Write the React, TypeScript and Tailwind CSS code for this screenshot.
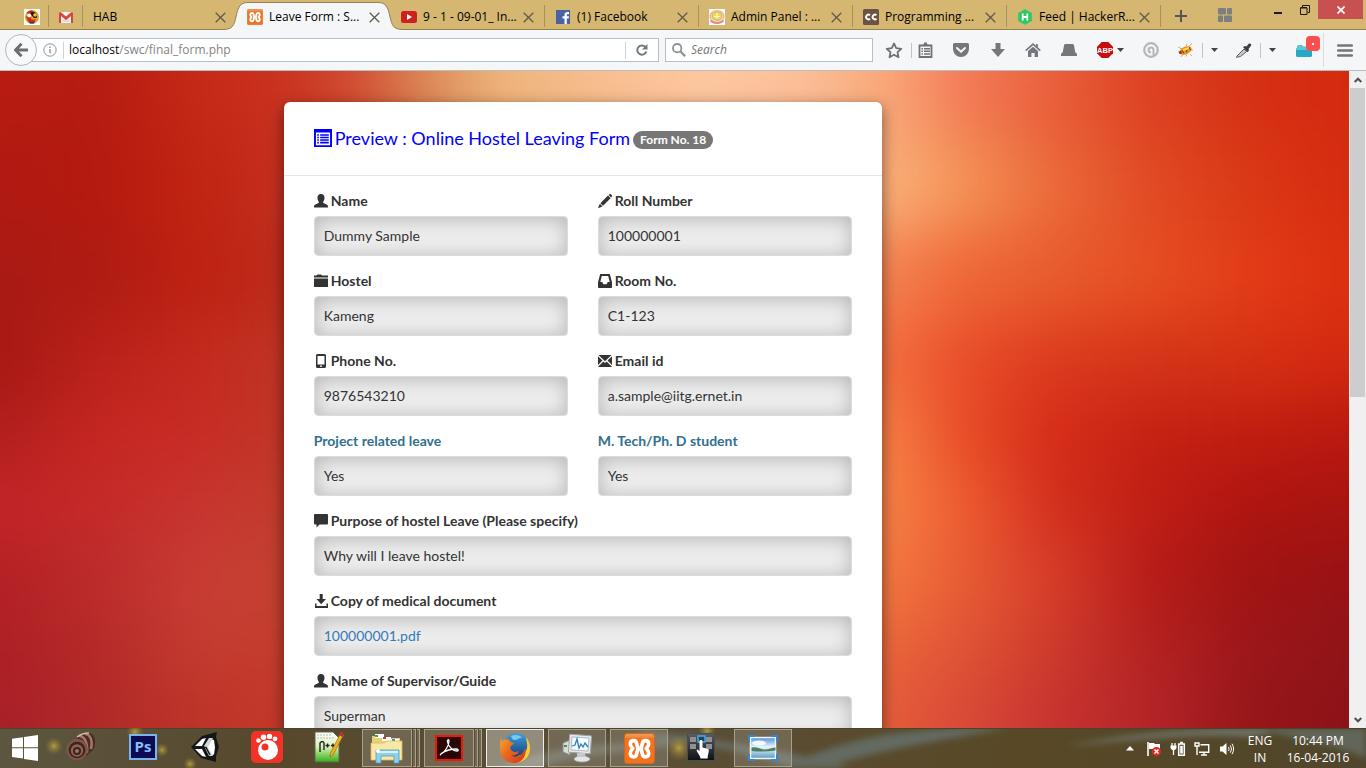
import React from "react";
import type { ReactNode } from "react";

const UI = "font-['Open_Sans','Noto_Sans',sans-serif]";

/* ---------- Favicons ---------- */

function XamppIcon({ size }: { size: number }) {
  return (
    <svg width={size} height={size} viewBox="0 0 32 32" aria-hidden="true">
      <defs>
        <linearGradient id="xg" x1="0" y1="0" x2="0" y2="1">
          <stop offset="0" stopColor="#f2a15c" />
          <stop offset=".14" stopColor="#ee8434" />
          <stop offset=".16" stopColor="#f17320" />
          <stop offset="1" stopColor="#f0731f" />
        </linearGradient>
      </defs>
      <rect x=".5" y=".5" width="31" height="31" rx="3" fill="url(#xg)" stroke="#d9661c" />
      <path
        d="M14.500 16L12.800 10C12 7 6.500 7 6.500 11.500C6.500 13.500 8 14.500 9 16C7.500 17.500 6.500 18.500 6.500 21C6.500 25.500 12 25.500 12.800 22.500zM17.500 16L19.200 10C20 7 25.500 7 25.500 11.500C25.500 13.500 24 14.500 23 16C24.500 17.500 25.500 18.500 25.500 21C25.500 25.500 20 25.500 19.200 22.500zM14 16h4"
        fill="none"
        stroke="#fff"
        strokeWidth="3.800"
        strokeLinecap="round"
        strokeLinejoin="round"
      />
    </svg>
  );
}

const favicons: Record<string, ReactNode> = {
  swirl: (
    <svg width="16" height="16" viewBox="0 0 16 16" aria-hidden="true">
      <rect width="16" height="16" fill="#fff" />
      <circle cx="8" cy="8" r="7" fill="#e8a020" />
      <path d="M2.500 4a6.500 6.500 0 0 1 6-2.400L7 6z" fill="#d02818" />
      <path d="M8 2.500a5 5 0 0 1 5 5c0 2-3 2-4 .5S5 5 8 2.500z" fill="#1c1c28" />
      <path d="M2 8c2-3 5-1 5 1s3 2 5 1c-1 4-6 5-8 2z" fill="#d8281c" />
      <circle cx="5.200" cy="6.500" r="1.900" fill="#fff" />
      <circle cx="11" cy="6" r="1.800" fill="#f5c040" />
      <path d="M4 11.500c2 2 5 2 7 .5l-1 2.500H6z" fill="#243c90" />
    </svg>
  ),
  gmail: (
    <svg width="16" height="16" viewBox="0 0 16 16" aria-hidden="true">
      <path d="M1 3h14v11H1z" fill="#f4f2f0" />
      <path d="M3 13l4-4 1 1 1-1 4 4z" fill="#dedbd8" />
      <path d="M1 3.500v10.500h2V7l5 4 5-4v7h2V3.500L13.500 3 8 7.500 2.500 3z" fill="#d8453a" />
    </svg>
  ),
  xampp: <XamppIcon size={16} />,
  youtube: (
    <svg width="16" height="16" viewBox="0 0 16 16" aria-hidden="true">
      <rect y="2" width="16" height="12" rx="2.500" fill="#d0201c" />
      <path d="M6 5l5 3-5 3z" fill="#fff" />
    </svg>
  ),
  facebook: (
    <svg width="16" height="16" viewBox="0 0 16 16" aria-hidden="true">
      <rect x="1" y="1" width="14" height="14" fill="#4862a3" />
      <path d="M9.500 15V9.600H7.500V7.300h2V5.800C9.500 3.800 10.600 3 12.300 3H14v2.200h-1.200c-.8 0-1 .4-1 1v1.100H14l-.3 2.300h-1.900V15z" fill="#fff" />
    </svg>
  ),
  seal: (
    <svg width="16" height="16" viewBox="0 0 16 16" aria-hidden="true">
      <rect width="16" height="16" fill="#fff" />
      <ellipse cx="8" cy="7.500" rx="7" ry="6" fill="#f3dfb8" stroke="#e5b0a0" strokeWidth="1.200" />
      <ellipse cx="8" cy="7" rx="5" ry="4.300" fill="#f0d65c" stroke="#c9a848" strokeWidth=".8" />
      <path d="M5 7.500h6M8 4.500v5" stroke="#fffbe0" strokeWidth="1.200" />
      <path d="M1.500 11.500c3 3.500 10 3.500 13 0" fill="none" stroke="#e08088" strokeWidth="1.600" />
    </svg>
  ),
  cc: (
    <svg width="16" height="16" viewBox="0 0 16 16" aria-hidden="true">
      <rect width="16" height="16" rx="1.500" fill="#6b5243" />
      <path d="M7 6.300A2.300 2.300 0 1 0 7 9.700M13.500 6.300a2.300 2.300 0 1 0 0 3.400" fill="none" stroke="#fff" strokeWidth="1.900" />
    </svg>
  ),
  hacker: (
    <svg width="16" height="16" viewBox="0 0 16 16" aria-hidden="true">
      <path d="M8 0.300l6.800 3.800v7.800L8 15.700l-6.800-3.800V4.100z" fill="#2ec866" />
      <path d="M5.700 4.500v7M10.300 4.500v7M5.700 8h4.600" stroke="#fff" strokeWidth="1.800" />
    </svg>
  ),
};

function CloseX() {
  return (
    <button aria-label="Close tab" className="flex size-3 shrink-0 items-center justify-center">
      <svg width="11" height="11" viewBox="0 0 11 11" aria-hidden="true">
        <path d="M.7.7l9.600 9.600M10.300.7L.7 10.300" stroke="#5f5a4a" strokeWidth="1.300" />
      </svg>
    </button>
  );
}

type TabInfo = { title: string; icon?: string; active?: boolean; line: boolean };

const tabs: TabInfo[] = [
  { title: "HAB", line: false },
  { title: "Leave Form : S...", icon: "xampp", active: true, line: false },
  { title: "9 - 1 - 09-01_ In...", icon: "youtube", line: true },
  { title: "(1) Facebook", icon: "facebook", line: true },
  { title: "Admin Panel : ...", icon: "seal", line: true },
  { title: "Programming ...", icon: "cc", line: true },
  { title: "Feed | HackerR...", icon: "hacker", line: true },
];

function Tab({ tab }: { tab: TabInfo }) {
  return (
    <div className="relative flex w-[154px] shrink-0 items-center gap-[3px] pt-1 pr-[11px] pl-2.5">
      {tab.active && (
        <svg className="absolute top-0 -left-[14px] h-[30px] w-[180px]" viewBox="0 0 180 30" aria-hidden="true">
          <path d="M0 30V29.500C10 29.500 11 25 13 17C15 7 17 2.500 25 2.500H155C163 2.500 165 7 167 17C169 25 170 29.500 180 29.500V30z" fill="#f5f6f7" />
          <path d="M0 29.500C10 29.500 11 25 13 17C15 7 17 2.500 25 2.500H155C163 2.500 165 7 167 17C169 25 170 29.500 180 29.500" fill="none" stroke="#94814d" />
        </svg>
      )}
      <button className="relative flex flex-1 items-center gap-1.5 text-left">
        {tab.icon && <span className="shrink-0">{favicons[tab.icon]}</span>}
        <span className="whitespace-nowrap">{tab.title}</span>
      </button>
      <span className="relative flex">
        <CloseX />
      </span>
      {tab.line && <span className="absolute top-[5px] right-0 h-[22px] w-px bg-[#a8935c]" />}
    </div>
  );
}

function TabStrip() {
  return (
    <header className={`flex h-[30px] shrink-0 border-b border-[#94814d] bg-[#d5b771] text-[12px] leading-4 text-black ${UI}`}>
      <nav aria-label="Tabs" className="-mb-px flex min-w-0 pl-[15px]">
        {["swirl", "gmail"].map((name) => (
          <button key={name} aria-label={name} className="relative flex w-[34px] shrink-0 items-center justify-center pt-1">
            {favicons[name]}
            <span className="absolute top-[5px] right-0 h-[22px] w-px bg-[#a8935c]" />
          </button>
        ))}
        {tabs.map((t) => (
          <Tab key={t.title} tab={t} />
        ))}
        <button aria-label="New tab" className="flex w-10 items-center justify-center pt-0.5">
          <svg width="12" height="12" viewBox="0 0 12 12" aria-hidden="true">
            <path d="M6 0v12M0 6h12" stroke="#55565a" strokeWidth="2" />
          </svg>
        </button>
        <button aria-label="Tab groups" className="flex w-12 items-center justify-center">
          <svg width="14" height="14" viewBox="0 0 14 14" fill="#7d7e7e" aria-hidden="true">
            <rect width="8" height="6.500" rx="1" />
            <rect x="9" width="5" height="6.500" rx="1" />
            <rect y="7.500" width="5" height="6.500" rx="1" />
            <rect x="6" y="7.500" width="8" height="6.500" rx="1" />
          </svg>
        </button>
      </nav>
      <div className="ml-auto flex h-[19px] pr-[3px]">
        <button aria-label="Minimize" className="flex w-[27px] items-center justify-center pt-1.5">
          <span className="h-0.5 w-2 bg-[#1c1a14]" />
        </button>
        <button aria-label="Restore" className="flex w-[27px] items-center justify-center">
          <svg width="10" height="10" viewBox="0 0 10 10" fill="none" stroke="#1c1a14" aria-hidden="true">
            <path d="M.5 3h6.500v6.500H.5zM.5 2.500H7" />
            <path d="M2.500 2.500v-2h7v7H7.500" />
          </svg>
        </button>
        <button aria-label="Close" className="flex w-[45px] items-center justify-center bg-[#c75050]">
          <svg width="8" height="8" viewBox="0 0 8 8" aria-hidden="true">
            <path d="M.5.5l7 7M7.500.5l-7 7" stroke="#fff" strokeWidth="1.700" />
          </svg>
        </button>
      </div>
    </header>
  );
}

/* ---------- Toolbar ---------- */

function Tool({ label, width, children }: { label: string; width: string; children: ReactNode }) {
  return (
    <button aria-label={label} className={`flex h-full shrink-0 items-center justify-center ${width}`}>
      {children}
    </button>
  );
}

function Caret() {
  return (
    <svg width="7" height="4" viewBox="0 0 7 4" aria-hidden="true">
      <path d="M0 0h7L3.500 4z" fill="#444" />
    </svg>
  );
}

function Rule() {
  return <span className="-mr-px h-[15px] w-px shrink-0 bg-[#c2c3c5]" />;
}

function Toolbar() {
  return (
    <div className={`flex h-[41px] shrink-0 items-center border-b border-[#b9bcc0] bg-[#f5f6f7] text-[12px] leading-4 ${UI}`}>
      <button aria-label="Back" className="z-10 ml-[5px] flex size-8 shrink-0 items-center justify-center rounded-full border border-[#aeb7c2] bg-[#f9f9fa]">
        <svg width="14" height="14" viewBox="0 0 14 14" aria-hidden="true">
          <path d="M7.500.8L1.500 7l6 6.200M2 7h12" fill="none" stroke="#6b6f74" strokeWidth="3" />
        </svg>
      </button>
      <div className="-ml-2 flex h-6 min-w-0 flex-1 items-center border border-[#b3bfcb] bg-white pl-[13px]">
        <svg width="14" height="14" viewBox="0 0 14 14" className="shrink-0" aria-hidden="true">
          <circle cx="7" cy="7" r="6.200" fill="none" stroke="#8f9194" />
          <path d="M7 6v4.300M7 3.500v1.500" stroke="#8f9194" strokeWidth="1.400" />
        </svg>
        <span className="mr-[5px] ml-1.5 h-[17px] w-px bg-[#d0d2d4]" />
        <a href="#address" className="flex-1 whitespace-nowrap text-[#838383]">
          <span className="text-black">localhost</span>/swc/final_form.php
        </a>
        <span className="h-[17px] w-px bg-[#cfd2d6]" />
        <Tool label="Reload" width="w-8">
          <svg width="12" height="12" viewBox="0 0 12 12" aria-hidden="true">
            <path d="M9.400 3A4.600 4.600 0 1 0 10.300 7.500" fill="none" stroke="#75787c" strokeWidth="2" />
            <path d="M11.500 0v5.500H6z" fill="#75787c" />
          </svg>
        </Tool>
      </div>
      <label className="ml-1.5 flex h-6 w-[208px] shrink-0 items-center border border-[#b3bfcb] bg-white pl-1.5">
        <svg width="14" height="14" viewBox="0 0 14 14" className="shrink-0" aria-hidden="true">
          <circle cx="5.200" cy="5.200" r="4.200" fill="none" stroke="#8d8f92" strokeWidth="1.800" />
          <path d="M8.300 8.300l4.900 4.900" stroke="#8d8f92" strokeWidth="2.200" />
        </svg>
        <input type="text" aria-label="Search" placeholder="Search" className="ml-[5px] w-full min-w-0 bg-transparent italic outline-none placeholder:text-[#757575]" />
      </label>
      <span className="w-[3px] shrink-0" />
      <Tool label="Bookmark" width="w-[35px]">
        <svg width="18" height="17" viewBox="0 0 18 17" aria-hidden="true">
          <path d="M9 1.500l2.200 4.700 5.100.6-3.800 3.400 1 5L9 12.700l-4.500 2.500 1-5L1.700 6.800l5.100-.6z" fill="none" stroke="#6e7277" strokeWidth="1.800" strokeLinejoin="round" />
        </svg>
      </Tool>
      <Rule />
      <Tool label="Bookmarks list" width="w-[29px]">
        <svg width="15" height="16" viewBox="0 0 15 16" aria-hidden="true">
          <path d="M1.500 3.500h12v11.500h-12z" fill="none" stroke="#6e7277" strokeWidth="1.800" />
          <path d="M4.500 2.500h6V4h-6zM6 .5h3V3H6z" fill="#6e7277" />
          <path d="M3.500 6.700h1.500M6 6.700h6M3.500 9.300h1.500M6 9.300h6M3.500 12h1.500M6 12h6" stroke="#6e7277" strokeWidth="1.400" />
        </svg>
      </Tool>
      <Tool label="Pocket" width="w-[41px]">
        <svg width="16" height="15" viewBox="0 0 16 15" aria-hidden="true">
          <path d="M1.500 0h13A1.500 1.500 0 0 1 16 1.500V6A8 8 0 0 1 0 6V1.500A1.500 1.500 0 0 1 1.500 0z" fill="#74787d" />
          <path d="M4 5l4 3.800L12 5" fill="none" stroke="#f5f6f7" strokeWidth="2" strokeLinecap="round" strokeLinejoin="round" />
        </svg>
      </Tool>
      <Tool label="Downloads" width="w-[34px]">
        <svg width="14" height="14" viewBox="0 0 14 14" aria-hidden="true">
          <path d="M4.500 0h5v6H14l-7 8-7-8h4.500z" fill="#74787d" />
        </svg>
      </Tool>
      <Tool label="Home" width="w-9">
        <svg width="16" height="15" viewBox="0 0 16 15" aria-hidden="true">
          <path d="M.7 7.600L8 1.200l7.300 6.400M12 1v4" fill="none" stroke="#74787d" strokeWidth="1.700" />
          <path d="M3 8l5-4.300L13 8v6H9.600v-4H6.400v4H3z" fill="#74787d" />
        </svg>
      </Tool>
      <Tool label="Hat" width="w-9">
        <svg width="16" height="12" viewBox="0 0 16 12" aria-hidden="true">
          <path d="M4.500 0h7c1 0 1.300.7 1.500 1.500L14.300 8.500c.7.3 1.700 1 1.700 2V12H0v-1.500c0-1 1-1.700 1.700-2L3 1.500C3.200.7 3.500 0 4.500 0z" fill="#74787d" />
        </svg>
      </Tool>
      <Tool label="Adblock Plus" width="w-[46px]">
        <span className="flex items-center gap-1">
          <svg width="16" height="16" viewBox="0 0 16 16" aria-hidden="true">
            <path d="M4.700 0h6.600L16 4.700v6.600L11.300 16H4.700L0 11.300V4.700z" fill="#c70d0f" />
            <text x="8" y="11" textAnchor="middle" fontSize="7.500" fontWeight="700" fill="#fff" fontFamily="Liberation Sans">
              ABP
            </text>
          </svg>
          <Caret />
        </span>
      </Tool>
      <Tool label="Avast" width="w-9">
        <svg width="16" height="16" viewBox="0 0 16 16" fill="none" stroke="#b6b6b6" aria-hidden="true">
          <circle cx="8" cy="8" r="6.800" strokeWidth="2.200" />
          <path d="M10.500 13.500V7.500A2.500 2.500 0 1 0 8 10.500" strokeWidth="2" />
        </svg>
      </Tool>
      <Tool label="Firebug" width="w-[33px]">
        <svg width="17" height="15" viewBox="0 0 17 15" aria-hidden="true">
          <path d="M1 4l4 2M1 9l3-.5M4 14l2-3M9 13.500l1-2.500M13 11l2 2M12 3l3-2.500M9 4l1-3M13 7h3" stroke="#b98a58" strokeWidth=".7" />
          <ellipse cx="8.500" cy="7.500" rx="6.500" ry="3.800" transform="rotate(-22 8.500 7.500)" fill="#e8941c" />
          <path d="M5 7l2 3.500M8.500 5.500l1.500 4M12 4l1.500 3" stroke="#7a3c0c" strokeWidth="1" />
          <ellipse cx="9" cy="6" rx="3.500" ry="1" transform="rotate(-22 9 6)" fill="#ffe070" />
          <circle cx="3.500" cy="9.500" r="1.500" fill="#b02810" />
        </svg>
      </Tool>
      <Rule />
      <Tool label="Firebug menu" width="w-[25px]">
        <Caret />
      </Tool>
      <Tool label="Colour picker" width="w-[33px]">
        <svg width="17" height="15" viewBox="0 0 17 15" aria-hidden="true">
          <path d="M1.500 13.500L9 6l2.500 2.500-6 5-4 .8z" fill="#c8c9ca" stroke="#5c5e60" />
          <path d="M8 4l2-1 1.500.5L13.500 1c1-1 3-.3 2.700 1.400L13.500 6l.5 1.500-1.500 1.800z" fill="#3c3e42" />
        </svg>
      </Tool>
      <Rule />
      <Tool label="Colour picker menu" width="w-[25px]">
        <Caret />
      </Tool>
      <Tool label="Folder" width="w-[38px]">
        <span className="relative flex h-[13px] w-4">
          <svg width="16" height="13" viewBox="0 0 16 13" aria-hidden="true">
            <path d="M1 2.500A1.500 1.500 0 0 1 2.500 1H6l1.500 1.500H14V5H1z" fill="#63c2cf" />
            <rect y="4" width="16" height="9" rx="1.500" fill="#27a9c4" />
            <rect y="4" width="16" height="2" rx="1" fill="#5cc7da" />
          </svg>
          <span className="absolute -top-2 left-[10px] flex h-[15px] w-[14px] items-center justify-center rounded-sm bg-[#fb4f4f] pt-0.5">
            <span className="size-0.5 bg-white" />
          </span>
        </span>
      </Tool>
      <span className="-mr-px h-[34px] w-px shrink-0 bg-[#dadbdd]" />
      <Tool label="Menu" width="w-[43px]">
        <svg width="16" height="13" viewBox="0 0 16 13" aria-hidden="true">
          <path d="M1.200 1.500h13.600M1.200 6.500h13.600M1.200 11.500h13.600" stroke="#72767b" strokeWidth="2.600" strokeLinecap="round" />
        </svg>
      </Tool>
    </div>
  );
}

/* ---------- Page backdrop ---------- */

const stops = [0, 100, 200, 280, 350, 430, 500, 600, 700, 800, 890, 960, 1050, 1150, 1250, 1349];

const bands: { y: number; h: number; colors: string[] }[] = [
  { y: -120, h: 150, colors: ["#b91c10", "#b51c10", "#c62a18", "#cb3220", "#d04c32", "#dd8c5a", "#efb67c", "#f8bf92", "#fecaa2", "#fcc29c", "#f9a678", "#f47c5a", "#ea623e", "#dc4022", "#d53014", "#d42a10"] },
  { y: 30, h: 40, colors: ["#b51b10", "#b41b10", "#c42716", "#c8301e", "#cc442c", "#d88452", "#eab078", "#f4b888", "#fac098", "#f8b88e", "#f8a474", "#f27e54", "#e85c38", "#dc4222", "#d53014", "#d42a10"] },
  { y: 70, h: 90, colors: ["#b01a12", "#b51a0e", "#c12412", "#c32e1e", "#c84030", "#d07848", "#e09868", "#e8a878", "#f0a878", "#f2a878", "#fab07a", "#f49458", "#ec6c3c", "#e04a24", "#da3816", "#d42c10"] },
  { y: 160, h: 90, colors: ["#a91a14", "#af1b12", "#be2212", "#bc2a1a", "#c03828", "#c84030", "#d05838", "#d86840", "#e07848", "#e88850", "#f48050", "#ee6838", "#e85c2e", "#e64e22", "#e23c18", "#dc3010"] },
  { y: 250, h: 80, colors: ["#a81814", "#ba221a", "#c42a1e", "#c03424", "#c03828", "#c84030", "#d05838", "#d86840", "#e07848", "#e88850", "#f46a3e", "#e84e2a", "#dc3a1e", "#d43418", "#d43014", "#d22810"] },
  { y: 330, h: 70, colors: ["#b21f1e", "#c62722", "#c82c24", "#c03626", "#c03828", "#c84030", "#d05838", "#d86840", "#e07848", "#e88850", "#f67e44", "#e84e28", "#d62c18", "#c42014", "#c01c10", "#b81810"] },
  { y: 400, h: 70, colors: ["#c42428", "#c42a28", "#c83430", "#c23c2c", "#c03828", "#c84030", "#d05838", "#d86840", "#e07848", "#e88850", "#f68042", "#ee5e32", "#d4301e", "#c01e14", "#ae1410", "#a81410"] },
  { y: 470, h: 80, colors: ["#b42024", "#bc2c2c", "#c83c34", "#c24230", "#c03828", "#c84030", "#d05838", "#d86840", "#e07848", "#e88850", "#f27640", "#e85c34", "#d63e2a", "#b61c18", "#a01414", "#981214"] },
  { y: 550, h: 60, colors: ["#ac2024", "#b42a28", "#c43c30", "#c43c2c", "#c03828", "#c84030", "#d05838", "#d86840", "#e07848", "#e88850", "#e8623a", "#e05434", "#ce3a2c", "#b42222", "#9c161a", "#901418"] },
  { y: 610, h: 180, colors: ["#a82028", "#b02a28", "#bc3428", "#c43828", "#c03828", "#c84030", "#d05838", "#d86840", "#e07848", "#e88850", "#e45a38", "#da4a38", "#c83430", "#b42428", "#961618", "#8c1218"] },
];

function Backdrop() {
  return (
    <svg className="absolute inset-0 size-full" viewBox="0 0 1349 657" preserveAspectRatio="none" aria-hidden="true">
      <defs>
        <filter id="soft" filterUnits="userSpaceOnUse" x="-150" y="-150" width="1649" height="957" colorInterpolationFilters="sRGB">
          <feGaussianBlur stdDeviation="20 30" />
        </filter>
        {bands.map((b, i) => (
          <linearGradient key={i} id={`band${i}`} gradientUnits="userSpaceOnUse" x1="0" y1="0" x2="1349" y2="0">
            {b.colors.map((c, j) => (
              <stop key={j} offset={stops[j] / 1349} stopColor={c} />
            ))}
          </linearGradient>
        ))}
      </defs>
      <g filter="url(#soft)">
        {bands.map((b, i) => (
          <rect key={i} x="-120" y={b.y} width="1590" height={b.h + 1} fill={`url(#band${i})`} />
        ))}
      </g>
    </svg>
  );
}

/* ---------- Form ---------- */

const glyphs: Record<string, ReactNode> = {
  user: <path d="M7 0c2.300 0 3.500 1.500 3.500 3.700 0 1.800-.6 3-1.300 4v1c.3.800 3.300 1.400 4.300 2.300.4.500.5 1.500.5 2.500H0c0-1 .1-2 .5-2.500 1-.9 4-1.500 4.300-2.300V7.700c-.7-1-1.300-2.200-1.300-4C3.500 1.500 4.700 0 7 0z" />,
  pencil: (
    <>
      <path d="M10 1.600L12.600 4.200 5 11.800 2.400 9.200zM1.900 9.800l2.600 2.600-4 1.500-.4-.4z" />
      <path d="M10.600 1l.9-.8c.4-.3.900-.3 1.300 0l1 1c.4.400.4.900 0 1.300l-.8.900z" />
    </>
  ),
  folder: (
    <>
      <path d="M0 13V4.500h14V13z" />
      <path d="M0 3.500V1.500h2.500L3.500 .500H7l1 1h6v2z" />
    </>
  ),
  inbox: <path fillRule="evenodd" d="M2.200 0h9.600L14 8.300V13.300a.7.7 0 0 1-.7.7H.7a.7.7 0 0 1-.7-.7V8.300zM3.800 1.900L2.300 8h2l1 2.200h3.400L9.700 8h2l-1.500-6.100z" />,
  phone: <path fillRule="evenodd" d="M3.500 0h7A1.500 1.500 0 0 1 12 1.500v11A1.500 1.500 0 0 1 10.500 14h-7A1.500 1.500 0 0 1 2 12.500v-11A1.500 1.500 0 0 1 3.500 0zM3.500 2v8.500h7V2zM6 11.500v1.200h2v-1.200z" />,
  mail: <path d="M.5 1h13L7 7.300zM0 2.200L4.500 6.600 0 11zM14 2.200v8.800L9.500 6.600zM.3 12.500L5.400 7.500 7 9l1.600-1.500 5.100 5v.5H.3z" />,
  comment: <path d="M1 0h12a1 1 0 0 1 1 1v8.500a1 1 0 0 1-1 1H5.500L2.500 13.500v-3H1a1 1 0 0 1-1-1V1a1 1 0 0 1 1-1z" />,
  download: <path d="M5.700 0h3v5H12L7.200 10.200 2.500 5h3.200zM1 9.500h1.500V12h10V9.500H14V14H1z" />,
  list: (
    <>
      <path fillRule="evenodd" d="M0 0h14v14H0zM1.500 2.700v9.900h11V2.700z" />
      <path d="M2.500 4h1.300v1.200H2.500zM4.800 4h6.700v1.200H4.800zM2.500 6h1.300v1.200H2.500zM4.800 6h6.700v1.200H4.800zM2.500 8h1.300v1.200H2.500zM4.800 8h6.700v1.200H4.800zM2.500 10h1.300v1.200H2.500zM4.800 10h6.700v1.200H4.800z" />
    </>
  ),
};

function Glyph({ name, size }: { name: string; size: number }) {
  return (
    <svg width={size} height={size} viewBox="0 0 14 14" fill="currentColor" className="shrink-0" aria-hidden="true">
      {glyphs[name]}
    </svg>
  );
}

const box =
  "h-10 w-full rounded border border-[#dcdcdc] bg-[#efefef] px-[9px] text-[14px] leading-5 shadow-[inset_0_2px_20px_#b4b4b4] outline-none";

type FieldInfo = { id: string; label: string; value: string; icon?: string; wide?: boolean; link?: boolean };

const fields: FieldInfo[] = [
  { id: "name", label: "Name", value: "Dummy Sample", icon: "user" },
  { id: "roll", label: "Roll Number", value: "100000001", icon: "pencil" },
  { id: "hostel", label: "Hostel", value: "Kameng", icon: "folder" },
  { id: "room", label: "Room No.", value: "C1-123", icon: "inbox" },
  { id: "phone", label: "Phone No.", value: "9876543210", icon: "phone" },
  { id: "email", label: "Email id", value: "a.sample@iitg.ernet.in", icon: "mail" },
  { id: "project", label: "Project related leave", value: "Yes" },
  { id: "student", label: "M. Tech/Ph. D student", value: "Yes" },
  { id: "purpose", label: "Purpose of hostel Leave (Please specify)", value: "Why will I leave hostel!", icon: "comment", wide: true },
  { id: "document", label: "Copy of medical document", value: "100000001.pdf", icon: "download", wide: true, link: true },
  { id: "guide", label: "Name of Supervisor/Guide", value: "Superman", icon: "user", wide: true },
];

function Field({ field }: { field: FieldInfo }) {
  return (
    <div className={field.wide ? "col-span-2" : ""}>
      <label
        htmlFor={field.id}
        className={`mb-[5px] flex h-5 items-center gap-[3px] text-[14px] leading-5 font-bold ${field.icon ? "text-[#333333]" : "text-[#31708f]"}`}
      >
        {field.icon && <Glyph name={field.icon} size={14} />}
        {field.label}
      </label>
      {field.link ? (
        <div className={`${box} flex items-center`}>
          <a id={field.id} href="#document" className="text-[#337ab7]">
            {field.value}
          </a>
        </div>
      ) : (
        <input id={field.id} type="text" readOnly defaultValue={field.value} className={`${box} pb-0.5 text-[#333333]`} />
      )}
    </div>
  );
}

function FormCard() {
  return (
    <section className="ml-[16.6%] w-[598px] max-w-full rounded-md bg-white pb-8 shadow-[0_5px_15px_rgba(0,0,0,0.5)]">
      <div className="flex h-[74px] items-center gap-[3px] border-b border-[#e5e5e5] px-[30px] pb-0.5 text-[18px] leading-5 text-[#0000ff]">
        <Glyph name="list" size={18} />
        <h1>Preview : Online Hostel Leaving Form</h1>
        <span className="mt-[5px] rounded-full bg-[#777777] px-[7px] py-[3px] text-[12px] leading-3 font-bold text-white">Form No. 18</span>
      </div>
      <form className="grid grid-cols-2 gap-x-[30px] gap-y-[15px] px-[30px] pt-[15px]">
        {fields.map((f) => (
          <Field key={f.id} field={f} />
        ))}
      </form>
    </section>
  );
}

function Scrollbar() {
  return (
    <div className="flex w-[17px] shrink-0 flex-col items-center bg-[#f0f0f0]" aria-hidden="true">
      <span className="flex h-[17px] items-center">
        <svg width="8" height="6" viewBox="0 0 8 6">
          <path d="M.7 5L4 1.700 7.300 5" fill="none" stroke="#505050" strokeWidth="2" />
        </svg>
      </span>
      <span className="h-[47%] w-[15px] bg-[#cdcdcd]" />
      <span className="mt-auto flex h-[17px] items-center">
        <svg width="8" height="6" viewBox="0 0 8 6">
          <path d="M.7 1L4 4.300 7.300 1" fill="none" stroke="#505050" strokeWidth="2" />
        </svg>
      </span>
    </div>
  );
}

/* ---------- Taskbar ---------- */

type AppInfo = { name: string; frame?: "open" | "active" | "stack"; art: ReactNode };

const apps: AppInfo[] = [
  {
    name: "Roll",
    art: (
      <svg width="32" height="30" viewBox="0 0 32 30" aria-hidden="true">
        <path d="M12 5C16 1 24-1 28 3c3 3 3 12-1 16l-9 8z" fill="#4a2c22" />
        <path d="M14 4c5 0 9 6 8 17M20 2c5 0 8 6 6 15" stroke="#a5796a" strokeWidth="2.500" fill="none" />
        <circle cx="12" cy="17.500" r="10.800" fill="#7d5445" />
        <circle cx="12" cy="18" r="8.300" fill="#3c241c" />
        <circle cx="12" cy="18.500" r="6.200" fill="#8b6455" />
        <circle cx="12" cy="19" r="4" fill="#3c241c" />
        <circle cx="12" cy="19" r="2" fill="#9b7565" />
        <path d="M12 5c4-3 8-4 12-4" stroke="#d9b8aa" strokeWidth="1.500" fill="none" />
      </svg>
    ),
  },
  {
    name: "Photoshop",
    art: (
      <svg width="28" height="26" viewBox="0 0 28 26" aria-hidden="true">
        <rect x="1" y="1" width="26" height="24" fill="#0e0b55" stroke="#78b4ee" strokeWidth="2" />
        <text x="14" y="18" textAnchor="middle" fontFamily="Open Sans" fontWeight="700" fontSize="15" fill="#7fc0f8">
          Ps
        </text>
      </svg>
    ),
  },
  {
    name: "Unity",
    art: (
      <svg width="30" height="30" viewBox="0 0 30 30" aria-hidden="true">
        <path d="M1 15L12 4l15-4-1 5 3 10-3 9 0 6-15-4z" fill="#14171a" />
        <path d="M5 14l7-7 4-1-4 8zM5 17h7l4 8-4-1zM15 15.500l5-8.500 4 1 1 7.500-1 7-4 1z" fill="#fff" />
        <path d="M14 14l5-8h4l-5 9 5 9h-4z" fill="#d4d8da" />
        <path d="M13 15.500h3l4 7.500" stroke="#14171a" strokeWidth="1.500" fill="none" />
      </svg>
    ),
  },
  {
    name: "GOM",
    art: (
      <svg width="32" height="32" viewBox="0 0 32 32" aria-hidden="true">
        <rect width="32" height="32" rx="5" fill="#f03228" />
        <circle cx="17" cy="19" r="10" fill="#fff" />
        <circle cx="14" cy="16" r="3.500" fill="#f03228" />
        <circle cx="7.500" cy="9.500" r="2.300" fill="#fff" />
        <circle cx="12.500" cy="6.200" r="2.700" fill="#fff" />
        <circle cx="18.500" cy="5.400" r="2.700" fill="#fff" />
        <circle cx="24" cy="7.800" r="2.400" fill="#fff" />
      </svg>
    ),
  },
  {
    name: "Notepad++",
    art: (
      <svg width="30" height="32" viewBox="0 0 30 32" aria-hidden="true">
        <defs>
          <linearGradient id="npp" x1="0" y1="0" x2="0" y2="1">
            <stop offset="0" stopColor="#fff" />
            <stop offset=".5" stopColor="#d8f0b8" />
            <stop offset="1" stopColor="#35b010" />
          </linearGradient>
        </defs>
        <path d="M1 1h18l6 6v24H1z" fill="url(#npp)" stroke="#5b625a" />
        <path d="M3 4h15M3 7h17" stroke="#b9bdb9" strokeDasharray="2 1" />
        <path d="M6 21v-9q2.500-3 4 0v7M11.500 14.500h4M13.500 12.500v4M17 14.500h4M19 12.500v4" stroke="#20251c" strokeWidth="1.400" fill="none" />
        <path d="M27 1.500l2.500 2.500L19 24l-3 2 .5-4z" fill="#f0b020" stroke="#9b6b18" strokeWidth=".7" />
        <path d="M26 1l3.800 2.500-1.300 2.600-4-2.400z" fill="#b53030" />
      </svg>
    ),
  },
  {
    name: "File Explorer",
    frame: "stack",
    art: (
      <svg width="34" height="31" viewBox="0 0 34 31" aria-hidden="true">
        <path d="M2 3h10l2 2h16v22H2z" fill="#e7cf7c" />
        <path d="M5 1h9v4H5zM12 4h9v4h-9zM21 6h8v3h-8z" fill="#fff" />
        <path d="M5 2h3v2H5z" fill="#28b030" />
        <path d="M13 4h3v2h-3z" fill="#d83828" />
        <path d="M22 6h3v2h-3z" fill="#3080e0" />
        <path d="M1 10h13l3-2h15v19H1z" fill="#f7e8a6" stroke="#d8bc60" strokeWidth=".8" />
        <path d="M6 17h23v13h-5v-7H11v7H6z" fill="#8fd0ec" stroke="#4b9cc8" strokeWidth=".8" />
        <path d="M7 18h21v2H7z" fill="#d8f2fc" />
        <circle cx="8" cy="18" r="2" fill="#fff" />
      </svg>
    ),
  },
  {
    name: "Acrobat",
    frame: "stack",
    art: (
      <svg width="28" height="26" viewBox="0 0 28 26" aria-hidden="true">
        <rect x="1" y="1" width="26" height="24" fill="#2a0707" stroke="#ee1608" strokeWidth="2" />
        <path d="M6 19c3-1 8-8 8-13 0-2-2-1.500-1.500 1 .7 4 5 9 9.500 9 2 0 1.500-2-1-2-4 0-10 1.500-14 4-2 1.500-2 2.500-1 1z" fill="none" stroke="#fff" strokeWidth="1.300" />
      </svg>
    ),
  },
  {
    name: "Firefox",
    frame: "active",
    art: (
      <svg width="32" height="32" viewBox="0 0 32 32" aria-hidden="true">
        <defs>
          <linearGradient id="fox" x1="0" y1="0" x2="1" y2=".8">
            <stop offset="0" stopColor="#f4a830" />
            <stop offset=".45" stopColor="#ea6a20" />
            <stop offset="1" stopColor="#d83c18" />
          </linearGradient>
          <linearGradient id="globe" x1="0" y1="0" x2="0" y2="1">
            <stop offset="0" stopColor="#3ea0dc" />
            <stop offset="1" stopColor="#143c78" />
          </linearGradient>
        </defs>
        <circle cx="17.500" cy="13.500" r="12.500" fill="url(#globe)" />
        <path d="M12 4c4-2 9-1 11 1.500-3 0-4 2.500-7 2.500s-3-2-4-4z" fill="#7cc8ec" />
        <path d="M27 5c5 6 5.500 15 1 20.500-5 5.500-12 6.500-18 3l10-5c6-1 9-6 8-12z" fill="#f8cc30" />
        <path d="M2.500 5.500c0 2 0 3 .7 4C5 7.500 7.500 7 10 7.500c.5 2 2 3 5 3.500 0 2-3.500 2-3.500 4-1 4 3.500 6.500 8 4 .5 3-4 5-7.500 4.500 5 3 13 0 14-8 2.500 8-3 15.500-11.500 15.500C7 31 1 25 1 17c0-4 0-8 1.500-11.500z" fill="url(#fox)" />
      </svg>
    ),
  },
  {
    name: "Monitor",
    frame: "open",
    art: (
      <svg width="32" height="30" viewBox="0 0 32 30" aria-hidden="true">
        <path d="M2 10l7-3v15l-7-3z" fill="#d7d9da" stroke="#8a8c8e" />
        <path d="M3 12h3v2H3z" fill="#40a028" />
        <rect x="8" y="2" width="22" height="18" rx="1" transform="rotate(4 19 11)" fill="#e6e8e9" stroke="#a0a3a5" />
        <rect x="10.500" y="4.500" width="17" height="13" transform="rotate(4 19 11)" fill="#f7fcff" stroke="#8ea6b5" strokeWidth=".7" />
        <path d="M11 13l3-1 2-6 2 9 2-4 2 3 2-4 3 4" fill="none" stroke="#2a7fb8" strokeWidth="1.300" />
        <path d="M16 20h8l1 5h-9z" fill="#c8cacc" />
        <ellipse cx="21" cy="26" rx="8" ry="3" fill="#e4e5e6" stroke="#a8aaac" strokeWidth=".7" />
      </svg>
    ),
  },
  { name: "XAMPP", frame: "open", art: <XamppIcon size={31} /> },
  {
    name: "Touch",
    art: (
      <svg width="28" height="28" viewBox="0 0 28 28" aria-hidden="true">
        <defs>
          <linearGradient id="tch" x1="0" y1="0" x2="0" y2="1">
            <stop offset="0" stopColor="#5a5d62" />
            <stop offset=".6" stopColor="#2b2f35" />
            <stop offset="1" stopColor="#0d1014" />
          </linearGradient>
        </defs>
        <rect x=".5" y=".5" width="27" height="27" rx="1" fill="url(#tch)" stroke="#4b4d50" />
        <path d="M3 4h6v5H3zM19 4h6v5h-6zM3 11h6v5H3zM19 11h6v5h-6z" fill="#8d9095" />
        <rect x="11" y="3" width="7" height="6" fill="#27415a" stroke="#38b0f0" strokeWidth="1.500" />
        <path d="M12.500 8.500c0-2 3-2 3 0v6l5 1.200c1.500.5 1.500 1.300 1.200 3l-1 4.800v2h-7.200l-.5-2-3-5c-1-2 .5-2.500 1.500-1.300l1 1z" fill="#fff" />
      </svg>
    ),
  },
  {
    name: "Pictures",
    frame: "open",
    art: (
      <svg width="30" height="26" viewBox="0 0 30 26" aria-hidden="true">
        <defs>
          <linearGradient id="sky" x1="0" y1="0" x2="0" y2="1">
            <stop offset="0" stopColor="#4c90d8" />
            <stop offset=".45" stopColor="#e8f4fc" />
            <stop offset=".7" stopColor="#a8d0e4" />
            <stop offset="1" stopColor="#5898c0" />
          </linearGradient>
        </defs>
        <rect x="2.500" y="2.500" width="25" height="21" fill="url(#sky)" stroke="#f0f4f6" strokeWidth="1.500" />
        <path d="M3.500 12.500c6-1 9 2 13 2s8-2 11-2v3c-8 1-15 1.500-24 .500z" fill="#4a8060" />
        <ellipse cx="11" cy="8" rx="7" ry="2.500" fill="#fff" opacity=".85" />
        <path d="M1 7V1h6M23 1h6v6M29 19v6h-6M7 25H1v-6" fill="none" stroke="#3484d0" strokeWidth="2" />
      </svg>
    ),
  },
];

function TaskButton({ app }: { app: AppInfo }) {
  const look =
    app.frame === "active"
      ? "border border-[#f0eee8] bg-white/35"
      : app.frame
        ? "border border-[#a8a28c] bg-white/15"
        : "pb-0.5";
  return (
    <button aria-label={app.name} className="flex w-[62px] shrink-0 gap-px px-0.5 py-px">
      <span className={`flex h-full flex-1 items-center justify-center ${look}`}>{app.art}</span>
      {app.frame === "stack" && (
        <>
          <span className="h-full w-[3px] border-y border-r border-[#a8a28c] bg-white/15" />
          <span className="h-full w-[3px] border-y border-r border-[#a8a28c] bg-white/15" />
        </>
      )}
    </button>
  );
}

function TaskbarArt() {
  return (
    <svg className="absolute inset-0 size-full" viewBox="0 0 1366 40" preserveAspectRatio="none" aria-hidden="true">
      <defs>
        <linearGradient id="tb" x1="0" y1="0" x2="1" y2="0">
          <stop offset="0" stopColor="#5c5640" />
          <stop offset=".2" stopColor="#57482c" />
          <stop offset=".45" stopColor="#5a4f38" />
          <stop offset=".75" stopColor="#584826" />
          <stop offset="1" stopColor="#50462c" />
        </linearGradient>
        <filter id="tbBlur" filterUnits="userSpaceOnUse" x="400" y="-20" width="1000" height="80">
          <feGaussianBlur stdDeviation="3" />
        </filter>
        <radialGradient id="spark">
          <stop offset="0" stopColor="#d8bc44" stopOpacity=".7" />
          <stop offset="1" stopColor="#a08030" stopOpacity="0" />
        </radialGradient>
      </defs>
      <rect width="1366" height="40" fill="url(#tb)" />
      <g filter="url(#tbBlur)">
        <path d="M500 40C560 12 620 20 690 6L700 12C640 26 580 24 540 40z" fill="#6c6a5a" />
        <path d="M640 2C720 12 800 24 850 40H790C760 26 700 16 640 8z" fill="#666a60" />
        <path d="M790 36C840 14 880 4 960 0H1010C930 14 880 22 830 38z" fill="#646a62" />
        <path d="M1066 18C1130 6 1200 -2 1290 2L1250 8C1190 4 1130 12 1066 18z" fill="#747c74" />
        <path d="M1255 0C1290 10 1330 14 1366 30V0z" fill="#62665a" />
      </g>
      <rect width="1366" height="1" fill="#4a4330" />
      <circle cx="54" cy="18" r="9" fill="url(#spark)" />
      <circle cx="162" cy="22" r="7" fill="url(#spark)" />
      <circle cx="190" cy="36" r="7" fill="url(#spark)" />
      <circle cx="135" cy="4" r="9" fill="url(#spark)" />
      <circle cx="679" cy="20" r="13" fill="url(#spark)" />
      <circle cx="707" cy="3" r="9" fill="url(#spark)" />
    </svg>
  );
}

function Taskbar() {
  return (
    <footer className={`relative flex h-10 shrink-0 overflow-hidden text-[12px] leading-[17px] text-white ${UI}`}>
      <TaskbarArt />
      <div className="relative flex min-w-0 flex-1">
        <button aria-label="Start" className="flex w-[50px] shrink-0 items-center justify-center">
          <svg width="26" height="26" viewBox="0 0 26 26" fill="#fff" aria-hidden="true">
            <path d="M0 3.700L11 2.200v10.100H0zM12 2L26 0v12.300H12zM0 13.300h11v10.100L0 21.900zM12 13.300h14V26l-14-2z" />
          </svg>
        </button>
        {apps.map((a) => (
          <TaskButton key={a.name} app={a} />
        ))}
      </div>
      <div className="relative flex shrink-0 items-center pt-px pr-3">
        <button aria-label="Show hidden icons" className="flex w-6 justify-center">
          <svg width="8" height="5" viewBox="0 0 8 5" aria-hidden="true">
            <path d="M4 0l4 4.500H0z" fill="#fff" />
          </svg>
        </button>
        <button aria-label="Action center" className="flex w-6 justify-center">
          <svg width="16" height="16" viewBox="0 0 16 16" aria-hidden="true">
            <path d="M2 1v14" stroke="#fff" strokeWidth="1.600" />
            <path d="M3 2h5l1 1h5v6H9L8 8H3z" fill="#fff" />
            <circle cx="10.500" cy="10.500" r="4.500" fill="#d82c20" />
            <path d="M8.500 8.500l4 4M12.500 8.500l-4 4" stroke="#fff" strokeWidth="1.500" />
          </svg>
        </button>
        <button aria-label="Battery" className="flex w-6 justify-center">
          <svg width="16" height="16" viewBox="0 0 16 16" aria-hidden="true">
            <path d="M2 2v3M5 2v3M3.500 8v6" stroke="#fff" strokeWidth="1.300" />
            <path d="M.5 4.500h6V7l-1.500 2H2L.5 7z" fill="#fff" />
            <path d="M8.700 3h5.600v11.300H8.700zM10 1.500h3" fill="none" stroke="#fff" strokeWidth="1.500" />
            <path d="M10.200 4.800h2.600v7.800h-2.600z" fill="#fff" />
          </svg>
        </button>
        <button aria-label="Network" className="flex w-6 justify-center">
          <svg width="16" height="16" viewBox="0 0 16 16" fill="none" stroke="#fff" strokeWidth="1.400" aria-hidden="true">
            <path d="M6.500 3.700h8.200v7.600H5M7 14h6M10 11.500V14" />
            <path d="M1 2h4v3H1zM3 5v9" />
          </svg>
        </button>
        <button aria-label="Volume" className="flex w-6 justify-center">
          <svg width="15" height="14" viewBox="0 0 15 14" aria-hidden="true">
            <path d="M1 4.500h2.500L7.500 1v12L3.500 9.500H1z" fill="#fff" />
            <path d="M9.500 5q1.200 2 0 4M11.300 3.300q2.500 3.700 0 7.400M13 1.700q3.200 5.300 0 10.600" fill="none" stroke="#fff" />
          </svg>
        </button>
        <button className="w-[44px] text-center">
          <span className="block">ENG</span>
          <span className="block">IN</span>
        </button>
        <button className="w-[72px] text-center">
          <span className="block whitespace-nowrap">10:44 PM</span>
          <span className="block whitespace-nowrap">16-04-2016</span>
        </button>
      </div>
    </footer>
  );
}

export default function App() {
  return (
    <div className="flex h-screen flex-col overflow-hidden">
      <TabStrip />
      <Toolbar />
      <main className="flex min-h-0 flex-1 font-['Lato',sans-serif]">
        <div className="relative min-w-0 flex-1 overflow-hidden">
          <Backdrop />
          <div className="relative mx-auto w-full max-w-[1170px] pt-[31px]">
            <FormCard />
          </div>
        </div>
        <Scrollbar />
      </main>
      <Taskbar />
    </div>
  );
}
